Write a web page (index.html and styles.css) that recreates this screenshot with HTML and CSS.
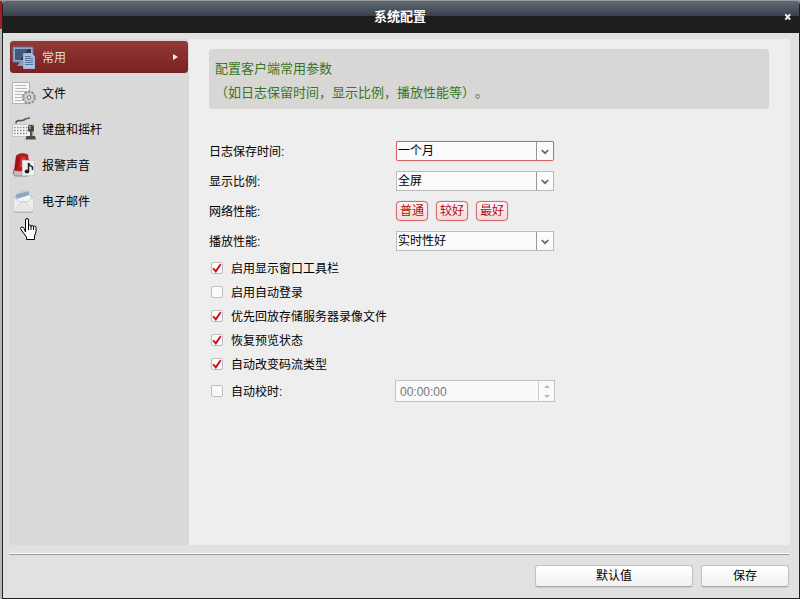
FILE: index.html
```html
<!DOCTYPE html>
<html lang="zh-CN">
<head>
    <meta charset="UTF-8">
    <title>系统配置</title>
    <link rel="stylesheet" href="styles.css">
</head>
<body>

<div class="window">
    <header class="titlebar">
        <h1>系统配置</h1>
        <svg class="close" width="8" height="8" viewBox="0 0 8 8"><path d="M1.3 1.3L6.2 6.7M6.2 1.3L1.3 6.7" stroke="#f2f2f2" stroke-width="2"/></svg>
    </header>

    <div class="main">
        <!-- Menu -->
        <nav class="sidebar">
            <a class="item active">
                <svg width="26" height="26" viewBox="0 0 26 26">
                    <path d="M2 3h20v15H2z" fill="#91a9cc" stroke="#61799e"/>
                    <path d="M4 5h16v11H4z" fill="#273b56"/>
                    <path d="M4 5h13L9 16H4z" fill="#435b7a"/>
                    <path d="M9 18h6v4H6z" fill="#849dc4"/>
                    <path d="M12.500 9.500h8l3 3v12h-11z" fill="#a9c0e3" stroke="#9db5da"/>
                    <path d="M14 12.500h6M14 14.500h8M14 16.500h8M14 18.500h8M14 20.500h8" stroke="#5a7299"/>
                </svg>
                <span>常用</span>
                <i class="arrow"></i>
            </a>
            <a class="item">
                <svg width="26" height="26" viewBox="0 0 26 26">
                    <path d="M1.500 2.500h17v21h-17z" fill="#f6f6f6" stroke="#b5b5b5"/>
                    <path d="M4 5.500h11M4 8.500h12M4 11.500h12M4 14.500h9M4 17.500h8M4 20.500h8" stroke="#b9b9b9"/>
                    <circle cx="18" cy="17.500" r="6" fill="#ddd" stroke="#8a8a8a" stroke-width="1.600" stroke-dasharray="2.500 1.270"/>
                    <circle cx="18" cy="17.500" r="5" fill="#ddd" stroke="#999" stroke-width=".8"/>
                    <path d="M18 13v9M13.500 17.500h9M15 14.500l6 6M21 14.500l-6 6" stroke="#a9a9a9" stroke-width=".8"/>
                    <circle cx="18" cy="17.500" r="1.800" fill="#eee" stroke="#777"/>
                </svg>
                <span>文件</span>
            </a>
            <a class="item">
                <svg width="26" height="26" viewBox="0 0 26 26">
                    <path d="M5 7.500c0-4 3-2.500 6-3s3-2.500 8-2.500" fill="none" stroke="#555" stroke-width="1.700"/>
                    <path d="M1.500 8.500h21v12h-21z" fill="#f5f5f5" stroke="#c4c4c4"/>
                    <path d="M3 11.500h14M3 14.500h14M3 17.500h13" stroke="#888" stroke-width="1.300" stroke-dasharray="1.500 1.500"/>
                    <rect x="17" y="9" width="6" height="7" rx="2" fill="#444"/>
                    <path d="M18 10h2v3h-2z" fill="#888"/>
                    <path d="M19 15h2.500v5H19z" fill="#555"/>
                    <path d="M15.500 20h8.500l1 3.500H14.500z" fill="#4a4a4a"/>
                </svg>
                <span>键盘和摇杆</span>
            </a>
            <a class="item">
                <svg width="26" height="26" viewBox="0 0 26 26">
                    <path d="M3 17l14 3v4H4l-2-2z" fill="#bbb" stroke="#888"/>
                    <path d="M5 3.500q5-4 12-1l2 15q-8 3-16 1z" fill="#c31820"/>
                    <path d="M5.500 5l3-1-1.500 14-3-1z" fill="#96141a"/>
                    <path d="M10 6q2-2 5 0v9H9z" fill="#e03a40"/>
                    <path d="M6 3q5-3 10 0-4 2-10 0z" fill="#8f2a2d"/>
                    <path d="M11.500 8.500h12v15h-12z" fill="#f0f0f0" stroke="#ccc"/>
                    <path d="M17.500 19v-8q1 3 4 4v3" fill="none" stroke="#222" stroke-width="1.500"/>
                    <ellipse cx="16" cy="19.500" rx="2.400" ry="1.900" fill="#222"/>
                </svg>
                <span>报警声音</span>
            </a>
            <a class="item">
                <svg width="26" height="26" viewBox="0 0 26 26">
                    <path d="M3 9.500L12.500 2l10 7.500V13H3z" fill="#d0d0d0" stroke="#c6c6c6"/>
                    <path d="M4.500 6.500l13-3.500 3 10H6z" fill="#f5f5f5"/>
                    <path d="M4.500 6.500l13-3.500 1 4-12.800 4z" fill="#86a9c9"/>
                    <path d="M2.500 9.500l7 4.500h6l7-4.500v14h-20z" fill="#eee" stroke="#d2d2d2"/>
                    <path d="M3 23l7-8.500h5l7 8.500" fill="#e8e8e8" stroke="#d8d8d8"/>
                    <path d="M3 24.500h19" stroke="#b5b5b5"/>
                </svg>
                <span>电子邮件</span>
            </a>
        </nav>

        <!-- General settings -->
        <section class="content">
            <div class="hint">
                <p>配置客户端常用参数</p>
                <p>（如日志保留时间，显示比例，播放性能等）。</p>
            </div>

            <div class="row">
                <label>日志保存时间:</label>
                <div class="select focus"><span>一个月</span><b><svg width="8" height="6" viewBox="0 0 8 6"><path d="M.7 1L4 4.200 7.300 1" fill="none" stroke="#666" stroke-width="1.700"/></svg></b></div>
            </div>
            <div class="row">
                <label>显示比例:</label>
                <div class="select"><span>全屏</span><b><svg width="8" height="6" viewBox="0 0 8 6"><path d="M.7 1L4 4.200 7.300 1" fill="none" stroke="#666" stroke-width="1.700"/></svg></b></div>
            </div>
            <div class="row">
                <label>网络性能:</label>
                <div class="levels">
                    <button class="level">普通</button>
                    <button class="level">较好</button>
                    <button class="level">最好</button>
                </div>
            </div>
            <div class="row">
                <label>播放性能:</label>
                <div class="select"><span>实时性好</span><b><svg width="8" height="6" viewBox="0 0 8 6"><path d="M.7 1L4 4.200 7.300 1" fill="none" stroke="#666" stroke-width="1.700"/></svg></b></div>
            </div>

            <div class="checks">
                <div class="check"><i class="box"><svg width="10" height="10" viewBox="0 0 10 10"><path d="M1.200 5.300l2.600 3L8.700 1.300" fill="none" stroke="#c91420" stroke-width="2"/></svg></i>启用显示窗口工具栏</div>
                <div class="check"><i class="box"></i>启用自动登录</div>
                <div class="check"><i class="box"><svg width="10" height="10" viewBox="0 0 10 10"><path d="M1.200 5.300l2.600 3L8.700 1.300" fill="none" stroke="#c91420" stroke-width="2"/></svg></i>优先回放存储服务器录像文件</div>
                <div class="check"><i class="box"><svg width="10" height="10" viewBox="0 0 10 10"><path d="M1.200 5.300l2.600 3L8.700 1.300" fill="none" stroke="#c91420" stroke-width="2"/></svg></i>恢复预览状态</div>
                <div class="check"><i class="box"><svg width="10" height="10" viewBox="0 0 10 10"><path d="M1.200 5.300l2.600 3L8.700 1.300" fill="none" stroke="#c91420" stroke-width="2"/></svg></i>自动改变码流类型</div>
            </div>
            <div class="row time-row">
                <div class="check"><i class="box"></i>自动校时:</div>
                <div class="time">
                    <span>00:00:00</span>
                    <div class="spin"><i class="up"></i><i class="down"></i></div>
                </div>
            </div>
        </section>
    </div>

    <footer class="footer">
        <button class="btn wide">默认值</button>
        <button class="btn">保存</button>
    </footer>
</div>

<!-- Mouse pointer -->
<svg class="cursor" width="17" height="22" viewBox="0 0 17 22">
    <path d="M5.500 14V2q0-1.500 1.500-1.500T8.500 2v6q0-1 1.200-1t1.300 1.500q0-1 1.200-1t1.300 1.500q0-1 1.200-1t1.300 1.500V14l-1.500 4v3.500h-8V19l-4.500-6-1.500-2.500q0-1.500 1.500-1.500t2 1.500z" fill="#fff" stroke="#000"/>
    <path d="M8.500 7v5M11 8v4M13.500 9v3" stroke="#000" fill="none"/>
</svg>

</body>
</html>
```
FILE: styles.css
```css
body {
    box-sizing: border-box;
    height: 599px;
    margin: 0;
    padding: 1px 0 0 2px;
    overflow: hidden;
    background: linear-gradient(#a51d22 28px, #b7b7b7 28px) no-repeat 0 1px / 2px 100%, #9b9b9b;
    font-family: "Liberation Sans", "Noto Sans CJK SC", sans-serif;
    font-size: 12px;
    color: #000;
}

button {
    font: inherit;
    color: #000;
    padding: 0;
}

.window {
    box-sizing: border-box;
    height: 598px;
    display: flex;
    flex-direction: column;
    background-color: #e1e1e1;
    border: 1px solid #222;
    border-top: none;
    border-radius: 4px 4px 0 0;
    overflow: hidden;
}

.titlebar {
    height: 32px;
    display: flex;
    align-items: center;
    background: linear-gradient(#5f6973, #38424c 15px, #1e1e1e 15px);
}

.titlebar h1 {
    flex: 1;
    margin: 0 -9px 0 0;
    padding-left: 4px;
    text-align: center;
    font-size: 13px;
    line-height: 18px;
    color: #fff;
}

.close {
    margin-right: 7px;
}

.main {
    height: 506px;
    margin: 6px 9px 0 6px;
    display: flex;
    border-radius: 3px;
    overflow: hidden;
}

/* Sidebar */
.sidebar {
    box-sizing: border-box;
    width: 180px;
    padding: 2px 1px;
    background-color: #d9d9d9;
}

.item {
    box-sizing: border-box;
    height: 32px;
    margin-bottom: 4px;
    padding: 0 10px 0 1px;
    display: flex;
    align-items: center;
    border-radius: 4px;
}

.item span {
    flex: 1;
    margin-left: 5px;
    padding-bottom: 2px;
}

.item.active {
    color: #ddd;
    background: linear-gradient(#963838, #772222);
    box-shadow: inset 0 0 1px #641919;
}

.arrow {
    border: 3px solid transparent;
    border-left: 5px solid #f3e9e9;
    border-right: none;
}

/* Content */
.content {
    flex: 1;
    padding: 10px 21px 10px 20px;
    background-color: #eee;
}

.hint {
    box-sizing: border-box;
    height: 60px;
    margin-bottom: 27px;
    padding: 8px 6px;
    border-radius: 4px;
    background-color: #d8d7d5;
    color: #397524;
    font-size: 13px;
    line-height: 24px;
    text-spacing-trim: space-all;
}

.hint p {
    margin: 0;
}

.row {
    height: 30px;
    display: flex;
    align-items: center;
}

.row label {
    width: 187px;
    padding-bottom: 2px;
}

.select {
    box-sizing: border-box;
    width: 158px;
    height: 20px;
    display: flex;
    border: 1px solid #bbb;
    background-color: #fbfbfb;
    line-height: 18px;
}

.select span {
    flex: 1;
    padding-left: 1px;
}

.select b {
    width: 16px;
    padding-top: 1px;
    display: flex;
    align-items: center;
    justify-content: center;
    border-left: 1px solid #999;
}

.select.focus {
    border-color: #d86666;
    border-radius: 2px;
    box-shadow: 0 0 1px #e58c8c;
}

.levels {
    display: flex;
    gap: 8px;
}

.level {
    box-sizing: border-box;
    width: 32px;
    height: 20px;
    border: 1px solid #d46a6a;
    border-radius: 4px;
    background: linear-gradient(#fdf4f4, #f4dada);
    box-shadow: 0 0 1px #d46a6a;
    color: #b30c12;
    line-height: 17px;
}

.check {
    box-sizing: border-box;
    height: 24px;
    padding: 0 0 2px 2px;
    display: flex;
    align-items: center;
}

.box {
    box-sizing: border-box;
    width: 12px;
    height: 12px;
    margin: 2px 8px 0 0;
    border: 1px solid #bdbdbd;
    border-radius: 2px;
    background-color: #fafafa;
}

.box svg {
    display: block;
}

.time-row .check {
    width: 186px;
}

.time {
    box-sizing: border-box;
    width: 160px;
    height: 22px;
    display: flex;
    border: 1px solid #c3c3c3;
    background-color: #fafafa;
    color: #777;
    line-height: 22px;
}

.time span {
    flex: 1;
    padding-left: 4px;
}

.spin {
    width: 15px;
    display: flex;
    flex-direction: column;
    align-items: center;
    justify-content: center;
    gap: 7px;
    border-left: 1px solid #ccc;
}

.up, .down {
    border: 3px solid transparent;
}

.up {
    border-top: none;
    border-bottom-color: #bbb;
}

.down {
    border-bottom: none;
    border-top-color: #bbb;
}

/* Bottom buttons */
.footer {
    margin: 8px 10px 0 6px;
    padding-top: 11px;
    display: flex;
    justify-content: flex-end;
    gap: 8px;
    border-top: 1px solid #fff;
    box-shadow: inset 0 1px #999;
}

.btn {
    width: 88px;
    height: 22px;
    border: 1px solid #c2c2c2;
    border-bottom-color: #aaa;
    border-radius: 3px;
    background: linear-gradient(#fff, #f1f1f1);
    box-shadow: 0 1px 1px #c8c8c8;
    line-height: 18px;
}

.btn.wide {
    width: 158px;
}

.cursor {
    position: absolute;
    left: 20px;
    top: 218px;
}
```
